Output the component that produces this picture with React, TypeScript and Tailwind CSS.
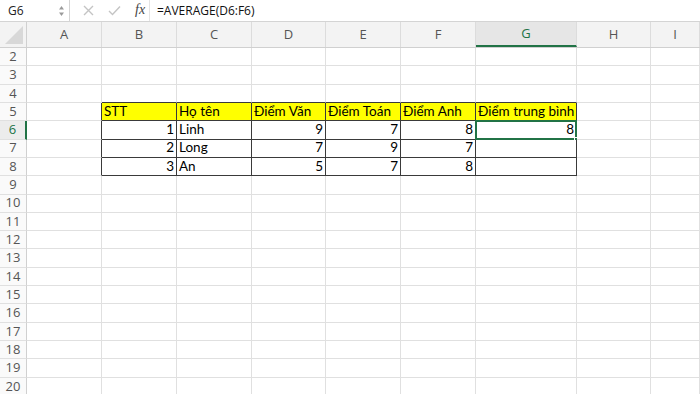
import React from 'react'

const cols = ['A', 'B', 'C', 'D', 'E', 'F', 'G', 'H', 'I']
const widths = ['w-[75px]', 'w-[75px]', 'w-[75px]', 'w-[74px]', 'w-[75px]', 'w-[75px]', 'w-[101px]', 'w-[74px]', 'w-[49px]']
const rows = Array.from({ length: 19 }, (_, i) => i + 2)

// dữ liệu bảng: B..G, dòng 5..8
const data: Record<number, (string | number)[]> = {
  5: ['STT', 'Họ tên', 'Điểm Văn', 'Điểm Toán', 'Điểm Anh', 'Điểm trung bình'],
  6: [1, 'Linh', 9, 7, 8, 8],
  7: [2, 'Long', 7, 9, 7, ''],
  8: [3, 'An', 5, 7, 8, ''],
}

function Cell({ row, col }: { row: number; col: number }) {
  const inTable = row >= 5 && row <= 8 && col >= 1 && col <= 6
  const leftOfTable = col === 0 && row >= 5 && row <= 8
  const aboveTable = row === 4 && col >= 1 && col <= 6
  const value = inTable ? data[row][col - 1] : ''
  const selected = row === 6 && col === 6

  const right = inTable || leftOfTable ? 'border-r-[#3a3a3a]' : 'border-r-[#e0e0e0]'
  const bottom = inTable || aboveTable ? 'border-b-[#3a3a3a]' : 'border-b-[#e0e0e0]'
  const bg = row === 5 && inTable ? 'bg-[#ffff00]' : 'bg-white'
  const align = typeof value === 'number' ? 'justify-end' : 'justify-start'

  return (
    <div
      className={`relative ${widths[col]} shrink-0 h-full border-r border-b ${right} ${bottom} ${bg} flex items-center ${align} px-[2px] text-[13.5px] text-black leading-none whitespace-nowrap`}
    >
      {value}
      {selected && (
        <>
          <div className="absolute -left-[1px] -top-[1px] -right-[1px] -bottom-[1px] border-2 border-[#217346]" />
          <div className="absolute -right-[3px] -bottom-[3px] w-[5px] h-[5px] bg-[#217346] border border-white" />
        </>
      )}
    </div>
  )
}

export default function App() {
  return (
    <div className="w-[700px] h-[394px] overflow-hidden bg-white" style={{ fontFamily: 'Lato, "Open Sans", sans-serif' }}>
      {/* thanh công thức */}
      <div className="flex items-center h-[22px] border-b border-[#d4d4d4] bg-white">
        <div className="w-[70px] h-full flex items-center justify-between pl-[8px] pr-[4px] border-r border-[#d4d4d4]">
          <span className="text-[12px] text-[#222]" style={{ fontFamily: '"Open Sans", sans-serif' }}>G6</span>
          <svg width="7" height="12" viewBox="0 0 7 12">
            <path d="M3.5 1 L6 4.5 H1 Z" fill="#9a9a9a" />
            <path d="M3.5 11 L6 7.5 H1 Z" fill="#9a9a9a" />
          </svg>
        </div>
        <div className="flex items-center gap-[14px] pl-[13px] w-[80px] h-full border-r border-[#e4e4e4]">
          <svg width="11" height="11" viewBox="0 0 11 11">
            <path d="M1 1 L10 10 M10 1 L1 10" stroke="#c4c4c4" strokeWidth="1.4" />
          </svg>
          <svg width="13" height="11" viewBox="0 0 13 11">
            <path d="M1 6 L4.5 9.5 L12 1.5" stroke="#c4c4c4" strokeWidth="1.4" fill="none" />
          </svg>
          <span className="italic text-[14px] text-[#444] -mt-[2px]" style={{ fontFamily: '"Liberation Serif", serif' }}>fx</span>
        </div>
        <span className="pl-[7px] text-[12px] text-[#111]" style={{ fontFamily: '"Open Sans", sans-serif' }}>=AVERAGE(D6:F6)</span>
      </div>

      {/* tiêu đề cột */}
      <div className="flex h-[26px] bg-[#f3f3f3] border-b border-[#d0d0d0]" style={{ fontFamily: '"Open Sans", sans-serif' }}>
        <div className="w-[27px] shrink-0 h-full border-r border-[#d0d0d0] flex items-end justify-end pr-[3px] pb-[3px]">
          <svg width="18" height="18" viewBox="0 0 18 18">
            <path d="M18 0 V18 H0 Z" fill="#d8d8d8" />
          </svg>
        </div>
        {cols.map((c, i) => (
          <div
            key={c}
            className={`${widths[i]} shrink-0 h-full flex items-center justify-center text-[13px] border-r border-[#dcdcdc] ${
              c === 'G' ? 'bg-[#e6e6e6] text-[#217346] border-b-2 border-b-[#217346]' : 'text-[#555]'
            }`}
          >
            {c}
          </div>
        ))}
      </div>

      {/* các dòng */}
      {rows.map((r) => (
        <div key={r} className="flex h-[18.32px]">
          <div
            className={`w-[27px] shrink-0 h-full flex items-center justify-center text-[13px] border-b border-[#e0e0e0] ${
              r === 6 ? 'bg-[#ececec] text-[#217346] border-r-2 border-r-[#217346]' : 'bg-[#fafafa] text-[#555] border-r border-r-[#d0d0d0]'
            }`}
            style={{ fontFamily: '"Open Sans", sans-serif' }}
          >
            {r}
          </div>
          {cols.map((c, i) => (
            <Cell key={c} row={r} col={i} />
          ))}
        </div>
      ))}
    </div>
  )
}
